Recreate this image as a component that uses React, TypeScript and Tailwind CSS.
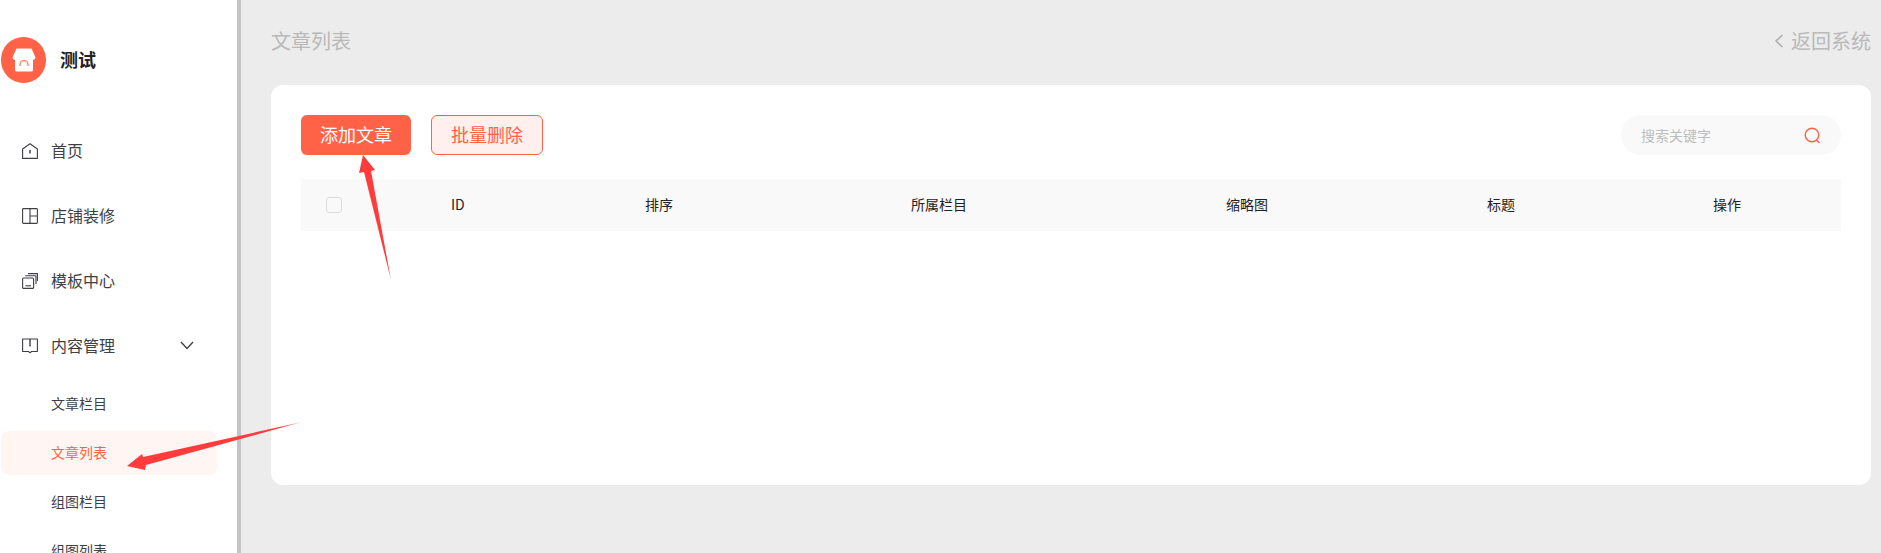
const font = "font-['Microsoft_YaHei','Noto_Sans_CJK_SC',sans-serif]";

function HomeIcon() {
  return (
    <svg width="16" height="16" viewBox="0 0 16 16" fill="none" stroke="#3f3f46" strokeWidth="1.1">
      <path d="M.6 6 8 .7 15.400 6v9.400H.6z" strokeLinejoin="round" />
      <path d="M8 7v3.500" strokeWidth="1.500" />
    </svg>
  );
}

function LayoutIcon() {
  return (
    <svg width="16" height="16" viewBox="0 0 16 16" fill="none" stroke="#3f3f46" strokeWidth="1.1">
      <rect x=".6" y=".6" width="14.800" height="14.800" rx=".8" />
      <path d="M8 .6v14.800M8 8h7.400" />
    </svg>
  );
}

function CopyIcon() {
  return (
    <svg width="16" height="16" viewBox="0 0 16 16" fill="none" stroke="#3f3f46" strokeWidth="1.1">
      <rect x=".6" y="5" width="11" height="10.400" rx="1" />
      <path d="M3.500 12.800h5.500" />
      <path d="M3.200 2.800h10a.8.8 0 0 1 .8.8V11" />
      <path d="M6 .6h9.400V8" />
    </svg>
  );
}

function BookIcon() {
  return (
    <svg width="16" height="16" viewBox="0 0 16 16" fill="none" stroke="#3f3f46" strokeWidth="1.1">
      <path d="M.6 1h14.800v12.500H9.500L8 14.800l-1.500-1.300H.6z" strokeLinejoin="round" />
      <path d="M8 1v7.500" strokeWidth="1.400" />
    </svg>
  );
}

function NavItem({ icon, label, arrow }: { icon: React.ReactNode; label: string; arrow?: boolean }) {
  return (
    <div className="flex h-[65px] items-center pl-[22px] pr-[43px] text-[16px] text-[#3f3f46]">
      <span className="mr-[13px] flex w-[16px] shrink-0">{icon}</span>
      <span className="flex-1 pb-[2px]">{label}</span>
      {arrow && (
        <svg width="14" height="9" viewBox="0 0 14 9" fill="none" stroke="#3f3f46" strokeWidth="1.300">
          <path d="M1 1l6 6.500L13 1" />
        </svg>
      )}
    </div>
  );
}

function SubItem({ label, active }: { label: string; active?: boolean }) {
  return (
    <div
      className={`ml-[1px] flex h-[44px] w-[216px] items-center rounded-lg pb-[1px] pl-[50px] text-[14px] ${
        active ? "bg-[#fff6f4] text-[#ff6247]" : "text-[#3f3f46]"
      }`}
    >
      {label}
    </div>
  );
}

const headers = ["ID", "排序", "所属栏目", "缩略图", "标题", "操作"];

export default function App() {
  return (
    <div className={`relative flex h-[553px] w-[1881px] overflow-hidden bg-[#ececec] ${font}`}>
      <aside className="h-full w-[241px] shrink-0 overflow-hidden border-r-4 border-[#c4c4c4] bg-white">
        <div className="mt-[37px] flex items-center pl-[1px]">
          <div className="flex h-[46px] w-[45px] items-center justify-center rounded-full bg-[#ff6247]">
            <svg width="24" height="24" viewBox="0 0 24 24">
              <path d="M4.500.5h15L23.500 9.500q-.3 2.300-2.500 2.600V22a1.500 1.500 0 0 1-1.500 1.500h-15A1.500 1.500 0 0 1 3 22V12.100Q.8 11.800.5 9.500z" fill="#fff" />
              <path d="M8 18v-1.500a4 4 0 0 1 8 0V18" fill="none" stroke="#ff8a75" strokeWidth="1.500" />
            </svg>
          </div>
          <span className="ml-[14px] pb-[1px] text-[18px] font-bold text-[#222]">测试</span>
        </div>
        <nav className="mt-[35px]">
          <NavItem icon={<HomeIcon />} label="首页" />
          <NavItem icon={<LayoutIcon />} label="店铺装修" />
          <NavItem icon={<CopyIcon />} label="模板中心" />
          <NavItem icon={<BookIcon />} label="内容管理" arrow />
          <div className="mt-[4px] flex flex-col gap-[5px]">
            <SubItem label="文章栏目" />
            <SubItem label="文章列表" active />
            <SubItem label="组图栏目" />
            <SubItem label="组图列表" />
          </div>
        </nav>
      </aside>

      <main className="flex-1 pl-[30px] pr-[10px]">
        <header className="flex h-[85px] items-center justify-between pb-[4px] text-[#b9b9b9]">
          <h1 className="text-[20px] font-normal">文章列表</h1>
          <div className="flex items-center text-[20px]">
            <svg width="10" height="14" viewBox="0 0 10 14" fill="none" stroke="#b0b0b0" strokeWidth="1.600" className="mr-[7px]">
              <path d="M8.500 1 2 7l6.500 6" />
            </svg>
            返回系统
          </div>
        </header>

        <section className="h-[400px] rounded-xl bg-white px-[30px] pt-[30px]">
          <div className="flex items-center justify-between">
            <div className="flex gap-[20px]">
              <button className="h-[40px] w-[110px] rounded-md bg-[#ff6247] pb-[2px] text-[18px] text-white">添加文章</button>
              <button className="h-[40px] w-[112px] rounded-md border border-[#ff6247] bg-[#fff0ed] pb-[2px] text-[18px] text-[#ff6247]">批量删除</button>
            </div>
            <div className="flex h-[40px] w-[220px] items-center justify-between rounded-full bg-[#f9f9f9] pl-[20px] pr-[20px]">
              <span className="text-[14px] text-[#bdbdbd]">搜索关键字</span>
              <svg width="17" height="17" viewBox="0 0 17 17" fill="none" stroke="#ff6247" strokeWidth="1.400">
                <circle cx="8" cy="8" r="6.800" />
                <path d="M12.500 13l3 3" />
              </svg>
            </div>
          </div>

          <div className="mt-[24px] grid h-[52px] grid-cols-[150px_194px_266px_315px_261px_226px_128px] items-center bg-[#f9f9f9] pb-[1px] text-[14px] text-[#222]">
            <span className="pl-[25px]">
              <span className="block h-[16px] w-[16px] rounded-[3px] border border-[#dcdcdc] bg-[#f9f9f9]" />
            </span>
            {headers.map((h) => (
              <span key={h}>{h}</span>
            ))}
          </div>
        </section>
      </main>

      {/* annotation arrows drawn over the screenshot */}
      <svg className="pointer-events-none absolute inset-0" width="1881" height="553">
        <defs>
          <linearGradient id="fadeLeft" gradientUnits="userSpaceOnUse" x1="127" y1="466" x2="302" y2="422">
            <stop offset="0.88" stopColor="#ff3b3b" />
            <stop offset="1" stopColor="#ff3b3b" stopOpacity="0.5" />
          </linearGradient>
        </defs>
        <polygon points="127,466 142,454 143,457 302,422 146,465 145,470" fill="url(#fadeLeft)" />
        <polygon points="363,155 375,170 371,171 391,280 364,172 359,173" fill="#ff3b3b" />
      </svg>
    </div>
  );
}
